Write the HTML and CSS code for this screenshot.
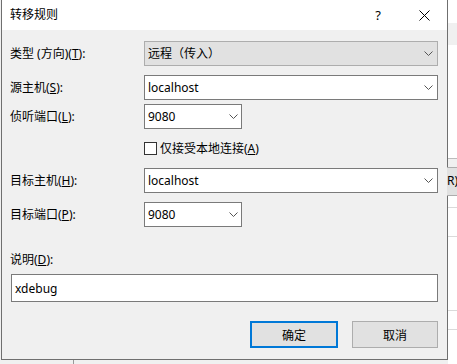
FILE: index.html
```html
<!DOCTYPE html>
<html lang="zh-CN">
<head>
    <meta charset="UTF-8">
    <meta name="viewport" content="width=device-width, initial-scale=1.0">
    <title>转移规则</title>
    <link rel="stylesheet" href="styles.css">
</head>
<body>
    <div class="screen">
        <div class="main-col">
            <div class="dialog">
                <div class="titlebar">
                    <span class="title">转移规则</span>
                    <span class="help">?</span>
                    <span class="close">
                        <svg width="11" height="11" viewBox="0 0 11 11"><path d="M0.5 0.5 L10.5 10.5 M10.5 0.5 L0.5 10.5" stroke="#000" stroke-width="1" fill="none"/></svg>
                    </span>
                </div>

                <div class="dialog-body">
                    <div class="row row-type">
                        <span class="label">类型 (方向)(<u>T</u>):</span>
                        <div class="combo wide disabled">
                            <span class="combo-text">远程（传入）</span>
                            <svg class="chev" width="9" height="5" viewBox="0 0 9 5"><path d="M0.5 0.5 L4.5 4.5 L8.5 0.5" stroke="#555" fill="none"/></svg>
                        </div>
                    </div>

                    <div class="row row-gap9">
                        <span class="label">源主机(<u>S</u>):</span>
                        <div class="combo wide">
                            <span class="combo-text">localhost</span>
                            <svg class="chev" width="9" height="5" viewBox="0 0 9 5"><path d="M0.5 0.5 L4.5 4.5 L8.5 0.5" stroke="#555" fill="none"/></svg>
                        </div>
                    </div>

                    <div class="row row-gap4">
                        <span class="label">侦听端口(<u>L</u>):</span>
                        <div class="combo small">
                            <span class="combo-text">9080</span>
                            <svg class="chev" width="9" height="5" viewBox="0 0 9 5"><path d="M0.5 0.5 L4.5 4.5 L8.5 0.5" stroke="#555" fill="none"/></svg>
                        </div>
                    </div>

                    <div class="check-row">
                        <span class="checkbox"></span>
                        <span class="check-text">仅接受本地连接(<u>A</u>)</span>
                    </div>

                    <div class="row row-gap13">
                        <span class="label">目标主机(<u>H</u>):</span>
                        <div class="combo wide">
                            <span class="combo-text">localhost</span>
                            <svg class="chev" width="9" height="5" viewBox="0 0 9 5"><path d="M0.5 0.5 L4.5 4.5 L8.5 0.5" stroke="#555" fill="none"/></svg>
                        </div>
                    </div>

                    <div class="row row-gap9">
                        <span class="label">目标端口(<u>P</u>):</span>
                        <div class="combo small">
                            <span class="combo-text">9080</span>
                            <svg class="chev" width="9" height="5" viewBox="0 0 9 5"><path d="M0.5 0.5 L4.5 4.5 L8.5 0.5" stroke="#555" fill="none"/></svg>
                        </div>
                    </div>

                    <div class="desc-label">说明(<u>D</u>):</div>
                    <div class="textbox">xdebug</div>

                    <div class="buttons">
                        <button class="btn btn-default">确定</button>
                        <button class="btn btn-cancel">取消</button>
                    </div>
                </div>
            </div>
            <div class="under-strip"><span class="under-line"></span></div>
        </div>

        <!-- window behind the dialog -->
        <div class="behind">
            <div class="bh-white bh-top"></div>
            <div class="bh-gray bh-band"></div>
            <div class="bh-white bh-list"></div>
            <div class="bh-gray bh-pad"></div>
            <div class="bh-button">R)</div>
            <div class="bh-rows">
                <div class="bh-row r1"></div>
                <div class="bh-row r2"></div>
                <div class="bh-row r3"></div>
                <div class="bh-row r4"></div>
            </div>
        </div>
    </div>
</body>
</html>
```

FILE: styles.css
```css
* {
    box-sizing: border-box;
}
body {
    margin: 0;
    padding: 0;
    font-family: "Noto Sans", "Noto Sans CJK SC", sans-serif;
    font-size: 12px;
    color: #000;
    background-color: #f0f0f0;
}
.screen {
    display: flex;
    width: 457px;
    height: 364px;
    overflow: hidden;
}
.main-col {
    width: 448px;
    display: flex;
    flex-direction: column;
}
.dialog {
    margin-left: 1px;
    width: 447px;
    background-color: #f0f0f0;
    border: 1px solid #6f6f6f;
    border-top: none;
}
.titlebar {
    height: 30px;
    background-color: #fff;
    display: flex;
    align-items: center;
    padding-left: 8px;
}
.title {
    flex: 1;
    line-height: 16px;
}
.help {
    width: 24px;
    text-align: center;
    margin-right: 11px;
    font-size: 13px;
}
.close {
    width: 46px;
    display: flex;
    justify-content: center;
    align-items: center;
}
.dialog-body {
    padding: 11px 9px 11px 8px;
}
.row {
    display: flex;
    align-items: center;
}
.row-type {
    margin-top: 0;
}
.row-gap9 {
    margin-top: 9px;
}
.row-gap4 {
    margin-top: 4px;
}
.row-gap13 {
    margin-top: 13px;
}
.label {
    width: 134px;
    line-height: 16px;
}
.combo {
    height: 25px;
    background-color: #fff;
    border: 1px solid #7a7a7a;
    display: flex;
    align-items: center;
    padding-left: 3px;
}
.combo.wide {
    width: 294px;
    padding-right: 4px;
}
.combo.small {
    width: 98px;
    padding-right: 3px;
}
.combo.disabled {
    background-color: #e1e1e1;
    border-color: #adadad;
}
.combo-text {
    flex: 1;
    line-height: 16px;
}
.chev {
    display: block;
}
.check-row {
    margin-top: 13px;
    margin-left: 134px;
    height: 13px;
    display: flex;
    align-items: center;
}
.checkbox {
    width: 13px;
    height: 13px;
    border: 1px solid #333;
    background-color: #fff;
    margin-right: 3px;
}
.check-text {
    line-height: 16px;
}
.desc-label {
    margin-top: 25px;
    line-height: 16px;
}
.textbox {
    margin-top: 6px;
    margin-left: 1px;
    width: 427px;
    height: 28px;
    background-color: #fff;
    border: 1px solid #7a7a7a;
    padding-left: 3px;
    display: flex;
    align-items: center;
}
.buttons {
    margin-top: 19px;
    display: flex;
    justify-content: flex-end;
    gap: 14px;
}
.btn {
    height: 27px;
    font-family: "Noto Sans CJK SC", sans-serif;
    font-size: 12px;
    color: #000;
    background-color: #e1e1e1;
    border: 1px solid #adadad;
    padding: 0;
    margin: 0;
}
.btn-default {
    width: 88px;
    border: 2px solid #0078d7;
}
.btn-cancel {
    width: 86px;
}
.under-strip {
    flex: 1;
    position: relative;
    background-color: #f0f0f0;
}
.under-line {
    position: absolute;
    left: 73px;
    top: 0;
    bottom: 0;
    border-left: 1px solid #999;
}
.behind {
    flex: 1;
    display: flex;
    flex-direction: column;
    background-color: #fff;
}
.bh-top {
    height: 23px;
}
.bh-band {
    height: 22px;
}
.bh-list {
    height: 114px;
    border-bottom: 1px solid #bcbcbc;
}
.bh-white {
    background-color: #fff;
}
.bh-gray {
    background-color: #f0f0f0;
}
.bh-pad {
    height: 8px;
}
.bh-button {
    height: 29px;
    background-color: #e1e1e1;
    border-top: 1px solid #adadad;
    border-bottom: 1px solid #adadad;
    line-height: 26px;
    margin-left: -1px;
    overflow: hidden;
    white-space: nowrap;
    font-family: "Noto Sans", sans-serif;
}
.bh-rows {
    flex: 1;
    background-color: #fff;
}
.bh-row {
    border-bottom: 1px solid #dadada;
}
.r1 {
    height: 12px;
}
.r2 {
    height: 29px;
}
.r3 {
    height: 74px;
}
.r4 {
    height: 19px;
}
```
